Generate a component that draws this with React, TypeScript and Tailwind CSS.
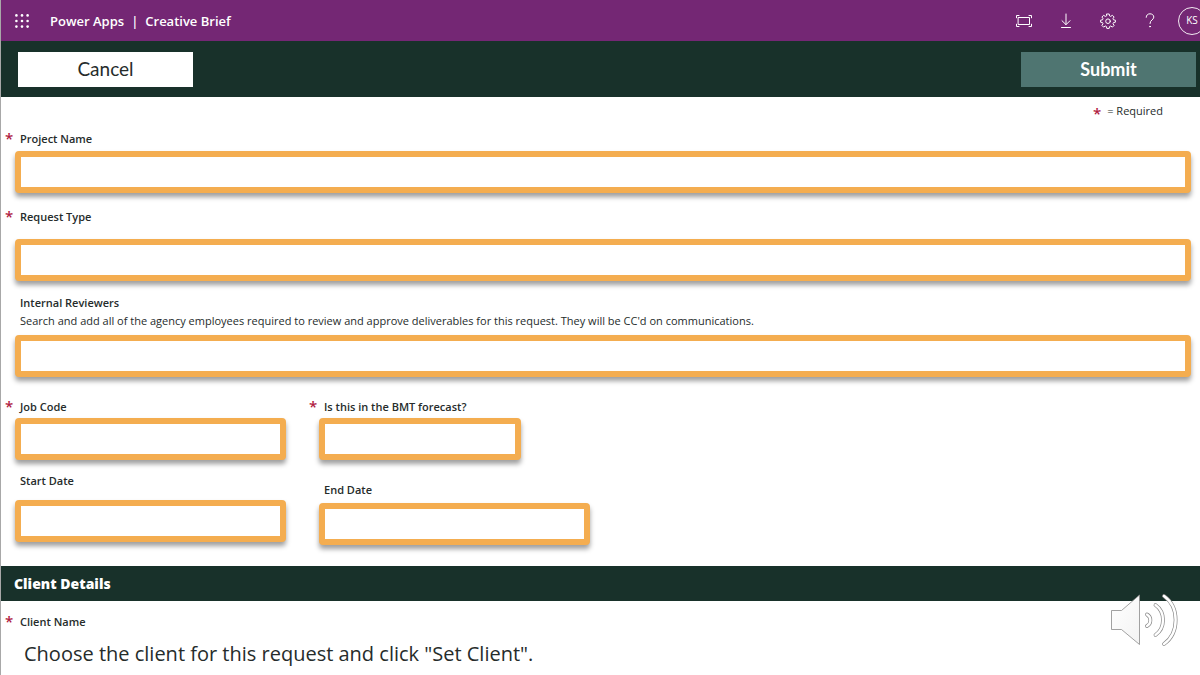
import type { ReactNode } from "react";

const iconProps = {
  fill: "none",
  stroke: "currentColor",
  strokeWidth: 1,
  strokeLinecap: "round" as const,
  strokeLinejoin: "round" as const,
};

function Waffle() {
  return (
    <svg width="14" height="14" viewBox="0 0 14 14" fill="currentColor" aria-hidden="true">
      {[1.4, 7, 12.6].map((y) =>
        [1.4, 7, 12.6].map((x) => <circle key={`${x}-${y}`} cx={x} cy={y} r="1.3" />),
      )}
    </svg>
  );
}

function FitIcon() {
  return (
    <svg width="16" height="14" viewBox="0 0 16 14" {...iconProps} aria-hidden="true">
      <rect x="2.5" y="3.5" width="11" height="7" />
      <path d="M.5 3.8V1.5H3M13 1.5h2.500v2.300M15.500 10.200v2.300H13M3 12.500H.5v-2.300" />
    </svg>
  );
}

function DownloadIcon() {
  return (
    <svg width="12" height="16" viewBox="0 0 12 16" {...iconProps} aria-hidden="true">
      <path d="M6 1v10.500M2 7.700l4 4 4-4M1.500 14.500h9" />
    </svg>
  );
}

function GearIcon() {
  return (
    <svg width="16" height="16" viewBox="0 0 16 16" {...iconProps} aria-hidden="true">
      <path d="M6.800 1h2.400l.4 1.900 1.100.5 1.700-1.100 1.700 1.700-1.100 1.700.5 1.100 1.900.4v2.000l-1.900.4-.5 1.100 1.100 1.700-1.700 1.700-1.700-1.100-1.100.5-.4 1.900H6.800l-.4-1.900-1.100-.5-1.700 1.100-1.700-1.700L3 10.700l-.5-1.100-1.900-.4V7.200l1.900-.4L3 5.700 1.900 4l1.700-1.700 1.700 1.100 1.100-.5z" />
      <circle cx="8" cy="8.200" r="2.300" />
    </svg>
  );
}

function HelpIcon() {
  return (
    <svg width="10" height="15" viewBox="0 0 10 15" {...iconProps} aria-hidden="true">
      <path d="M1.200 4.300C1.200 2.200 2.800.8 5 .8s3.800 1.400 3.800 3.300C8.800 6.900 5 6.800 5 10.500" />
      <circle cx="5" cy="13.600" r=".45" fill="currentColor" />
    </svg>
  );
}

function SpeakerIcon() {
  return (
    <svg width="68" height="54" viewBox="0 0 68 54" aria-hidden="true">
      <defs>
        <linearGradient id="cone" x1="0" y1="0" x2="1" y2="1">
          <stop offset="0" stopColor="#ffffff" />
          <stop offset="1" stopColor="#f3f3f3" />
        </linearGradient>
      </defs>
      <path d="M.5 17.500h10L28.500 2v49.500L10.500 36.500H.5z" fill="url(#cone)" stroke="#8a8a8a" strokeWidth=".8" />
      <g fill="none" strokeLinecap="round">
        <g stroke="#8a8a8a" strokeWidth="3.800">
          <path d="M36 21.500c4.500 2.500 4.500 9 0 11.500" />
          <path d="M44.500 12c10 7 10 23 0 30" />
          <path d="M53 3c15.500 11 15.500 37 0 48" />
        </g>
        <g stroke="#ffffff" strokeWidth="2.400">
          <path d="M36 21.500c4.500 2.500 4.500 9 0 11.500" />
          <path d="M44.500 12c10 7 10 23 0 30" />
          <path d="M53 3c15.500 11 15.500 37 0 48" />
        </g>
      </g>
    </svg>
  );
}

function HeaderButton({ label, children }: { label: string; children: ReactNode }) {
  return (
    <button type="button" aria-label={label} className="flex h-full w-[42px] shrink-0 items-center justify-center">
      {children}
    </button>
  );
}

function FieldLabel({ id, text, required }: { id: string; text: string; required?: boolean }) {
  return (
    <label htmlFor={id} className="flex h-4 text-[11px] leading-4 font-semibold">
      <span className="w-[15px] shrink-0 text-[15px] leading-[14px] text-[#b0203f]">{required ? "*" : ""}</span>
      {text}
    </label>
  );
}

function Field({ id }: { id: string }) {
  return (
    <div className="pl-[10px]">
      <input
        id={id}
        type="text"
        className="block h-[42px] w-full rounded-[4px] border-6 border-[#f4ad50] bg-white px-2 text-sm shadow-[0_4px_5px_rgba(0,0,0,0.38)] outline-none"
      />
    </div>
  );
}

export default function App() {
  return (
    <div className="min-h-screen border-l border-[#a8a8a8] bg-white font-['Open_Sans','Noto_Sans',sans-serif] text-[#262c2b]">
      <header className="flex h-[41px] items-center justify-between overflow-hidden bg-[#742774] text-white">
        <div className="flex items-center">
          <button type="button" aria-label="App launcher" className="flex h-10 w-[42px] items-center justify-center">
            <Waffle />
          </button>
          <div className="flex gap-[7px] pt-[2px] pl-[7px] text-[13px] font-semibold">
            <span>Power Apps</span>
            <span>|</span>
            <span>Creative Brief</span>
          </div>
        </div>
        <div className="-mr-[13px] flex h-full items-center">
          <HeaderButton label="Fit to page"><FitIcon /></HeaderButton>
          <HeaderButton label="Download"><DownloadIcon /></HeaderButton>
          <HeaderButton label="Settings"><GearIcon /></HeaderButton>
          <HeaderButton label="Help"><HelpIcon /></HeaderButton>
          <HeaderButton label="Account">
            <span className="flex size-7 shrink-0 items-center justify-center rounded-full border border-white/90 text-[10px]">KS</span>
          </HeaderButton>
        </div>
      </header>

      <form>
        <div className="flex h-14 items-center justify-between bg-[#18312a] pr-1 pl-[17px]">
          <button type="button" className="h-[35px] w-[175px] bg-white font-[Lato] text-[19px]">Cancel</button>
          <button type="submit" className="h-[35px] w-[175px] bg-[#4f7571] font-[Lato] text-[18px] font-bold text-white">Submit</button>
        </div>

        <div className="pr-[9px] pl-1">
          <p className="flex h-[34px] justify-end gap-[6px] pt-[6px] pr-7 text-[11px] leading-4">
            <span className="text-[15px] leading-5 font-semibold text-[#b0203f]">*</span>
            <span>= Required</span>
          </p>
          <FieldLabel id="project" text="Project Name" required />
          <div className="pt-1"><Field id="project" /></div>

          <div className="pt-4"><FieldLabel id="type" text="Request Type" required /></div>
          <div className="pt-[14px]"><Field id="type" /></div>

          <div className="pt-[14px]"><FieldLabel id="reviewers" text="Internal Reviewers" /></div>
          <p className="pt-[2px] pl-[15px] text-[11px] leading-4">
            Search and add all of the agency employees required to review and approve deliverables for this request. They will be CC'd on communications.
          </p>
          <div className="pt-[6px]"><Field id="reviewers" /></div>

          <div className="flex gap-[23px] pt-[22px] pb-[21px]">
            <div className="w-[281px]">
              <FieldLabel id="job" text="Job Code" required />
              <div className="pt-[3px]"><Field id="job" /></div>
              <div className="pt-[13px]"><FieldLabel id="start" text="Start Date" /></div>
              <div className="pt-[11px]"><Field id="start" /></div>
            </div>
            <div className="w-[281px]">
              <FieldLabel id="forecast" text="Is this in the BMT forecast?" required />
              <div className="w-[212px] pt-[3px]"><Field id="forecast" /></div>
              <div className="pt-[22px]"><FieldLabel id="end" text="End Date" /></div>
              <div className="pt-[5px]"><Field id="end" /></div>
            </div>
          </div>
        </div>

        <section>
          <div className="relative flex h-[35px] items-center bg-[#18312a] pl-[13px]">
            <h2 className="text-[14px] font-extrabold text-white">Client Details</h2>
            <button type="button" aria-label="Play audio" className="absolute top-[27px] right-[21px]">
              <SpeakerIcon />
            </button>
          </div>
          <div className="pt-[13px] pl-1 text-[11px] leading-4 font-semibold">
            <h3 className="flex h-4">
              <span className="w-[15px] shrink-0 text-[15px] leading-[14px] text-[#b0203f]">*</span>
              Client Name
            </h3>
          </div>
          <p className="pt-[10px] pl-[23px] text-[20px] leading-7">Choose the client for this request and click "Set Client".</p>
        </section>
      </form>
    </div>
  );
}
